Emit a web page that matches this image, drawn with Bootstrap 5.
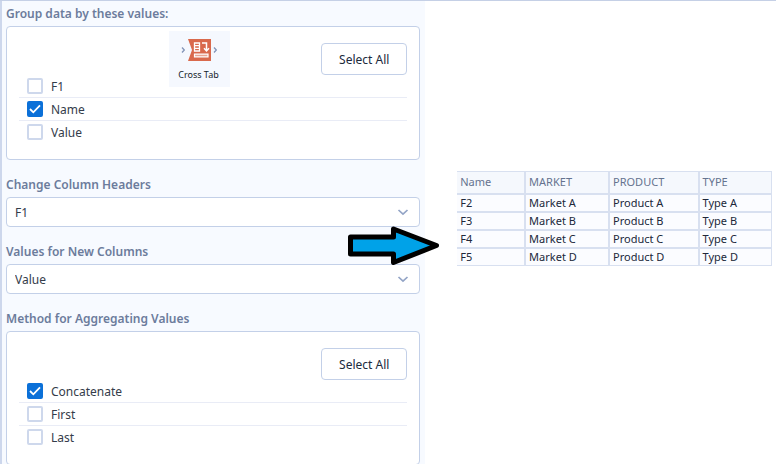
<!DOCTYPE html>
<html lang="en">
<head>
<meta charset="utf-8">
<meta name="viewport" content="width=device-width, initial-scale=1">
<title>Cross Tab configuration</title>
<link href="https://cdn.jsdelivr.net/npm/bootstrap@5.3.0/dist/css/bootstrap.min.css" rel="stylesheet">
<style>
  body { font-family: "Noto Sans", "Open Sans", sans-serif; font-size: 12px; line-height: 20px; color: #343c4a; background: #fff; }
  .workspace { min-height: 100vh; border-top: 1px solid #c5d0e6; }
  .config { flex: 0 0 54.8%; height: calc(100vh - 1px); overflow: hidden; background: #f7faff; border-left: 2px solid #cdd7ec; padding: 3px 5px 0 4px; }
  .results { flex: 1 1 0; min-width: 0; padding: 170px 4px 0 32px; }
  .field-title { display: block; font-size: 12px; line-height: 20px; font-weight: 600; color: #6c7c9c; margin: 0 0 2px; }
  .field-block { margin-bottom: 15px; }
  .option-box { background: #fff; border: 1px solid #c3d0e8; border-radius: 4px; padding: 16px 12px 15px; }
  .btn-all { width: 86px; height: 32px; padding: 2px 0 0; font-size: 12px; line-height: 20px; color: #202a3c; border: 1px solid #c3d0e8; border-radius: 4px; background: #fff; }
  .option-row { height: 23px; padding: 0 8px; gap: 8px; border-bottom: 1px solid #e9ecf6; }
  .option-row:last-child { border-bottom-color: transparent; }
  .option-row label { line-height: 18px; padding-top: 2px; }
  .option-row .form-check-input { width: 16px; height: 16px; margin: 0; border: 2px solid #ced8ec; border-radius: 2px; }
  .option-row .form-check-input:checked { background-color: #0b70d8; border-color: #0b70d8; background-size: 18px 18px; background-image: url("data:image/svg+xml,%3Csvg xmlns='http://www.w3.org/2000/svg' viewBox='0 0 18 18'%3E%3Cpath d='M4 9l3.300 3.300 6.700-7' fill='none' stroke='white' stroke-width='1.8'/%3E%3C/svg%3E"); }
  .picker { height: 30px; padding: 1px 32px 0 8px; font-size: 12px; line-height: 20px; color: #343c4a; border: 1px solid #c3d0e8; border-radius: 4px; background-color: #fff; background-size: 12px 12px; background-position: right 10px center; background-image: url("data:image/svg+xml,%3Csvg xmlns='http://www.w3.org/2000/svg' viewBox='0 0 12 12'%3E%3Cpath d='M1.500 4L6 8.200 10.500 4' fill='none' stroke='%2393a4c6' stroke-width='1.700'/%3E%3C/svg%3E"); }
  .tool-tile { top: 4px; left: 162px; width: 61px; height: 56px; padding: 7px 2px 0 0; background: #f5f8fe; font-size: 9px; line-height: 16px; color: #141c2c; }
  .tool-tile svg { display: block; margin: 0 auto 5px; }
  .flow-arrow { left: 348px; top: 224px; }
  .result-grid { width: 100%; table-layout: fixed; border-collapse: collapse; font-size: 11px; line-height: 16px; color: #20283a; border-top: 1px solid #d8e0f0; }
  .result-grid th, .result-grid td { border: 2px solid #d8e0f0; border-left: 0; padding: 0 3px; height: 18px; background: #fbfcff; white-space: nowrap; }
  .result-grid th { height: 22px; font-weight: 400; color: #65738f; background: #f5f8fd; border-top: 0; }
  .result-grid th:last-child, .result-grid td:last-child { border-right-width: 1px; }
  .result-grid tr:last-child td { border-bottom-width: 1px; }
</style>
</head>
<body>
<div class="workspace d-flex position-relative">
  <form class="config">
    <div class="field-block" role="group" aria-labelledby="group-title">
      <div class="field-title" id="group-title">Group data by these values:</div>
      <div class="option-box position-relative">
        <div class="tool-tile position-absolute text-center">
          <svg width="38" height="24" viewBox="0 0 38 24" aria-hidden="true">
            <path d="M2 9.500l2.300 2.500L2 14.500M34 9.500l2.300 2.500-2.300 2.500" fill="none" stroke="#8294b8" stroke-width="1.300"/>
            <path d="M8 1h23v22H8l4-11z" fill="#d9694c"/>
            <path d="M14.500 5h5v8h-5zM14.500 7.700h5M14.500 10.300h5" fill="none" stroke="#fff" stroke-width="1.300"/>
            <path d="M14.500 16.200h13.500v2.600H14.500z" fill="#e9a693" stroke="#fff" stroke-width="1.200"/>
            <path d="M22 5h4.500v7M24 10.300l2.500 2.700 2.500-2.700" fill="none" stroke="#fff" stroke-width="1.500"/>
          </svg>
          Cross Tab
        </div>
        <div class="d-flex justify-content-end"><button type="button" class="btn btn-all">Select All</button></div>
        <div class="option-row d-flex align-items-center"><input class="form-check-input" type="checkbox" id="f1"><label for="f1">F1</label></div>
        <div class="option-row d-flex align-items-center"><input class="form-check-input" type="checkbox" id="name" checked><label for="name">Name</label></div>
        <div class="option-row d-flex align-items-center"><input class="form-check-input" type="checkbox" id="value"><label for="value">Value</label></div>
      </div>
    </div>
    <div class="field-block">
      <label class="field-title" for="headers">Change Column Headers</label>
      <select class="form-select picker" id="headers"><option>F1</option><option>Name</option><option>Value</option></select>
    </div>
    <div class="field-block">
      <label class="field-title" for="values">Values for New Columns</label>
      <select class="form-select picker" id="values"><option>Value</option><option>Name</option><option>F1</option></select>
    </div>
    <div role="group" aria-labelledby="method-title">
      <div class="field-title" id="method-title">Method for Aggregating Values</div>
      <div class="option-box">
        <div class="d-flex justify-content-end"><button type="button" class="btn btn-all">Select All</button></div>
        <div class="option-row d-flex align-items-center"><input class="form-check-input" type="checkbox" id="concat" checked><label for="concat">Concatenate</label></div>
        <div class="option-row d-flex align-items-center"><input class="form-check-input" type="checkbox" id="first"><label for="first">First</label></div>
        <div class="option-row d-flex align-items-center"><input class="form-check-input" type="checkbox" id="last"><label for="last">Last</label></div>
      </div>
    </div>
  </form>
  <svg class="flow-arrow position-absolute" width="92" height="42" viewBox="0 0 92 42" aria-hidden="true">
    <path d="M2.500 12H45.500V4L88.500 20.500 45.500 37.500V29H2.500z" fill="#00a2e8" stroke="#000" stroke-width="5" stroke-linejoin="round"/>
  </svg>
  <main class="results">
    <table class="result-grid">
      <colgroup><col style="width:21.600%"><col style="width:26.700%"><col style="width:28.500%"><col style="width:23.200%"></colgroup>
      <thead><tr><th>Name</th><th>MARKET</th><th>PRODUCT</th><th>TYPE</th></tr></thead>
      <tbody>
        <tr><td>F2</td><td>Market A</td><td>Product A</td><td>Type A</td></tr>
        <tr><td>F3</td><td>Market B</td><td>Product B</td><td>Type B</td></tr>
        <tr><td>F4</td><td>Market C</td><td>Product C</td><td>Type C</td></tr>
        <tr><td>F5</td><td>Market D</td><td>Product D</td><td>Type D</td></tr>
      </tbody>
    </table>
  </main>
</div>
<script src="https://cdn.jsdelivr.net/npm/bootstrap@5.3.0/dist/js/bootstrap.bundle.min.js"></script>
</body>
</html>
